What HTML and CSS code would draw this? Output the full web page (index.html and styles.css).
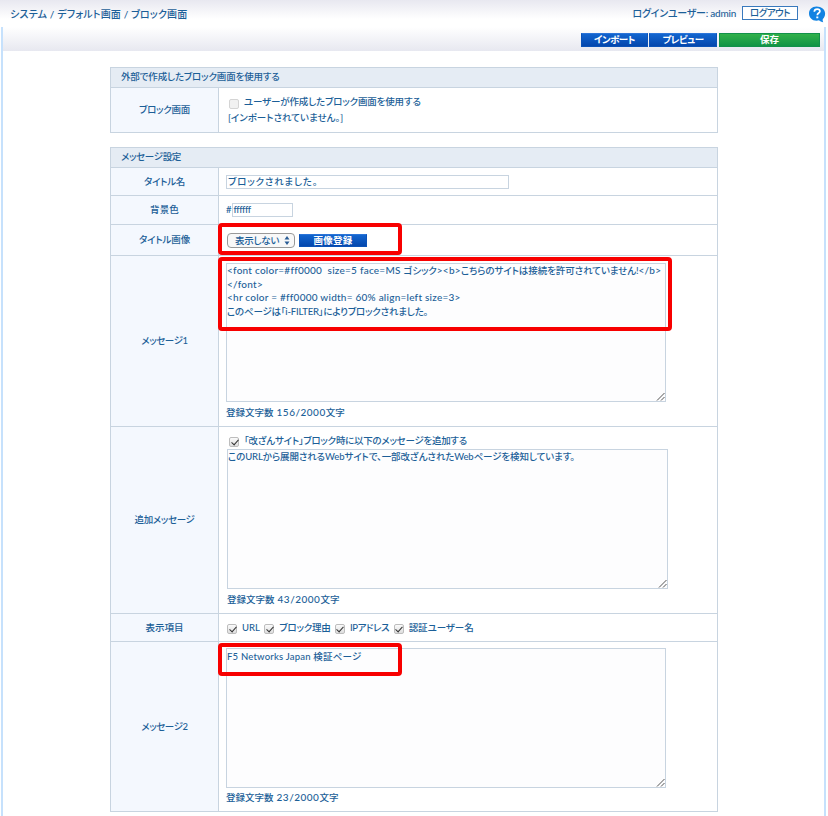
FILE: index.html
```html
<!DOCTYPE html>
<html lang="ja">
<head>
<meta charset="utf-8">
<title>ブロック画面</title>
<link rel="stylesheet" href="styles.css">
</head>
<body>
<header class="topbar">
  <nav class="crumbs"><span class="t s-crumb">システム / デフォルト画面 / ブロック画面</span></nav>
  <div class="user"><span class="t s-user">ログインユーザー: admin</span></div>
  <button class="logout"><span class="t s-logout">ログアウト</span></button>
  <svg class="help" viewBox="0 0 18 18"><path d="M8.500.5C4 .5 1 3.500 1 7.500S4 14.700 8.500 14.700c1 0 1.800-.1 2.500-.4 1 1 2.600 1.700 4.300 1.900-.6-.9-.8-2-.5-3.200 1.500-1.300 2.300-3.200 2.300-5.500C17.100 3.500 13.500.5 8.500.5Z" fill="#1283e2"/><path d="M6.300 5.700c.1-1.700 1.200-2.600 2.900-2.600 1.600 0 2.700.8 2.700 2.100 0 1.900-2.500 1.800-2.600 4" fill="none" stroke="#fff" stroke-width="1.700"/><rect x="8.300" y="10.500" width="2" height="1.800" fill="#fff"/></svg>
</header>
<main class="frame">
  <div class="toolbar">
    <button class="btn import"><span class="t s-btn">インポート</span></button>
    <button class="btn"><span class="t s-btn">プレビュー</span></button>
    <button class="btn save"><span class="t">保存</span></button>
  </div>
  <section class="panel">
    <h2><span class="t s-h1">外部で作成したブロック画面を使用する</span></h2>
    <div class="row r-ext">
      <div class="name"><span class="t s-n1">ブロック画面</span></div>
      <div class="cell">
        <label class="opt first"><i class="cb off"></i><span class="t s-useext">ユーザーが作成したブロック画面を使用する</span></label>
        <p class="state"><span class="t">[インポートされていません。]</span></p>
      </div>
    </div>
  </section>
  <section class="panel settings">
    <h2><span class="t s-h2">メッセージ設定</span></h2>
    <div class="row r-title">
      <div class="name"><span class="t s-n2">タイトル名</span></div>
      <div class="cell mid"><div class="input wide"><span class="t s-title">ブロックされました。</span></div></div>
    </div>
    <div class="row r-color">
      <div class="name"><span class="t s-n3">背景色</span></div>
      <div class="cell mid"><span class="t">#</span><div class="input short"><span class="t s-hex">ffffff</span></div></div>
    </div>
    <div class="row r-image">
      <div class="name"><span class="t s-n4">タイトル画像</span></div>
      <div class="cell mid">
        <div class="select"><span class="t s-sel">表示しない</span><svg viewBox="0 0 6 9"><path d="M3 0 5.500 3.500H.5ZM3 9 .5 5.500h5Z" fill="#2a5c95"/></svg></div>
        <button class="btn img"><span class="t s-img">画像登録</span></button>
      </div>
      <i class="mark m-image"></i>
    </div>
    <div class="row r-msg1">
      <div class="name"><span class="t s-n5">メッセージ1</span></div>
      <div class="cell">
        <div class="area a1">
          <p><span class="t s-l1"><span class="en">&lt;font color=#ff0000&nbsp; size=5 face=MS </span>ゴシック<span class="en">&gt;&lt;b&gt;</span>こちらのサイトは接続を許可されていません!<span class="en">&lt;/b&gt;</span></span></p>
          <p><span class="t en">&lt;/font&gt;</span></p>
          <p><span class="t en">&lt;hr color = #ff0000 width= 60% align=left size=3&gt;</span></p>
          <p><span class="t s-l4">このページは「i-FILTER」によりブロックされました。</span></p>
          <svg class="grip" viewBox="0 0 9 9"><path d="M1 8.500 8.500 1M5 8.500 8.500 5" stroke="#555" fill="none"/></svg>
        </div>
        <p class="count"><span class="t">登録文字数<span class="num"> 156/2000</span>文字</span></p>
      </div>
      <i class="mark m-msg1"></i>
    </div>
    <div class="row r-add">
      <div class="name"><span class="t s-n6">追加メッセージ</span></div>
      <div class="cell">
        <label class="opt add"><i class="cb on"></i><span class="t s-add">「改ざんサイト」ブロック時に以下のメッセージを追加する</span></label>
        <div class="area a2">
          <p><span class="t s-l5">このURLから展開されるWebサイトで、一部改ざんされたWebページを検知しています。</span></p>
          <svg class="grip" viewBox="0 0 9 9"><path d="M1 8.500 8.500 1M5 8.500 8.500 5" stroke="#555" fill="none"/></svg>
        </div>
        <p class="count c2"><span class="t">登録文字数<span class="num"> 43/2000</span>文字</span></p>
      </div>
    </div>
    <div class="row r-items">
      <div class="name"><span class="t">表示項目</span></div>
      <div class="cell mid">
        <label class="item"><i class="cb on"></i><span class="t">URL</span></label>
        <label class="item"><i class="cb on"></i><span class="t s-i2">ブロック理由</span></label>
        <label class="item"><i class="cb on"></i><span class="t s-i3">IPアドレス</span></label>
        <label class="item"><i class="cb on"></i><span class="t s-i4">認証ユーザー名</span></label>
      </div>
    </div>
    <div class="row r-msg2">
      <div class="name"><span class="t s-n5">メッセージ2</span></div>
      <div class="cell">
        <div class="area a3">
          <p><span class="t s-l6">F5 Networks Japan 検証ページ</span></p>
          <svg class="grip" viewBox="0 0 9 9"><path d="M1 8.500 8.500 1M5 8.500 8.500 5" stroke="#555" fill="none"/></svg>
        </div>
        <p class="count"><span class="t">登録文字数<span class="num"> 23/2000</span>文字</span></p>
      </div>
      <i class="mark m-msg2"></i>
    </div>
  </section>
</main>
</body>
</html>
```
FILE: styles.css
```css
* { box-sizing: border-box; }
body {
  margin: 0;
  width: 828px;
  height: 816px;
  overflow: hidden;
  background: #fff;
  color: #1c5f98;
  font: 500 9.5px/13.6px Lato, "Noto Sans CJK JP", sans-serif;
  font-feature-settings: "palt";
}
h2, p { margin: 0; font: inherit; }
button { font: inherit; padding: 0; border: 0; }
.t { white-space: nowrap; }
.en { font-size: 10px; letter-spacing: .24px; line-height: 1; }
.num { font-size: 10px; letter-spacing: .5px; line-height: 1; }
.s-crumb { letter-spacing: .17px; }
.s-user { letter-spacing: -.25px; }
.s-logout, .s-btn { letter-spacing: -.5px; }
.s-h1, .s-useext { letter-spacing: -.15px; }
.s-n1, .s-n2, .s-sel, .s-i2 { letter-spacing: -.26px; }
.s-h2, .s-n6 { letter-spacing: -.32px; }
.s-title { letter-spacing: .8px; }
.s-n3 { letter-spacing: .16px; }
.s-hex { letter-spacing: -.5px; }
.s-n4 { letter-spacing: -.15px; }
.s-img { letter-spacing: .25px; }
.s-n5 { letter-spacing: -.4px; }
.s-l1 { letter-spacing: -.08px; }
.s-l4 { letter-spacing: -.2px; }
.s-l5 { letter-spacing: -.1px; }
.s-add { letter-spacing: -.26px; }
.s-i3 { letter-spacing: -.42px; }
.s-i4 { letter-spacing: -.06px; }
.s-l6 { letter-spacing: .2px; }
.topbar {
  display: flex;
  align-items: flex-start;
  height: 27px;
  background: linear-gradient(#e8e8f0, #fff 19px);
}
.crumbs { padding: 8px 0 0 10px; flex: 1; font-size: 10px; }
.user { padding-top: 7px; margin-right: 6px; font-size: 10px; }
.logout {
  width: 56px;
  height: 14px;
  margin: 6px 10px 0 0;
  border: 1px solid #3979bd;
  background: #fff;
  color: #1c5f98;
  line-height: 12px;
}
.help { width: 18px; height: 18px; margin: 6px 2px 0 0; }
.frame {
  height: 789px;
  margin: 0 2px 0 1px;
  border: solid #c6e1fc;
  border-width: 0 2px;
}
.toolbar {
  display: flex;
  justify-content: flex-end;
  gap: 1px;
  height: 24px;
  padding: 6px 4px 0 0;
  background: linear-gradient(#fff, #e7e8f0);
}
.btn {
  width: 68px;
  height: 14px;
  border: 1px solid #0b52b7;
  border-top-color: #2b74d8;
  background: linear-gradient(#1265cf, #0447ad);
  color: #fff;
  font-weight: 700;
  line-height: 10px;
}
.import { width: 67px; }
.btn .t { display: block; }
.save {
  width: 101px;
  margin-left: 1px;
  border-color: #11914a;
  background: linear-gradient(#30b04a, #119445);
}
.panel {
  width: 608px;
  margin: 16px 0 0 107px;
  border: 1px solid #c8d4e0;
}
.settings { margin-top: 14px; }
.panel h2 {
  height: 19px;
  padding-left: 10px;
  background: #e5ecf4;
  line-height: 18px;
}
.row {
  position: relative;
  display: grid;
  grid-template-columns: 108px 1fr;
  border-top: 1px solid #c8d4e0;
}
.name {
  display: flex;
  align-items: center;
  justify-content: center;
  border-right: 1px solid #c8d4e0;
  background: #f4f8fe;
}
.cell { padding-left: 7px; }
.mid { display: flex; align-items: center; }
.r-ext { height: 45px; }
.r-title { height: 28px; }
.r-color { height: 29px; }
.r-image { height: 31px; }
.r-msg1 { height: 171px; }
.r-add { height: 187px; }
.r-items { height: 28px; }
.r-msg2 { height: 170px; }
.opt { display: flex; align-items: center; }
.first { padding: 7px 0 0 3px; }
.first .cb { top: 2px; }
.state { padding: 2px 0 0 2px; }
.cb {
  position: relative;
  top: 1px;
  width: 10px;
  height: 10px;
  margin-right: 5px;
  border: 1px solid #bdbdbd;
  border-radius: 2px;
  background: linear-gradient(#fbfbfb, #dedede);
}
.off { border-color: #d4d4d4; background: #f1f1f1; }
.on::after {
  content: "";
  position: absolute;
  left: 2.5px;
  top: 0;
  width: 3px;
  height: 6px;
  border: solid #333;
  border-width: 0 1.5px 1.5px 0;
  transform: rotate(42deg);
}
.input {
  height: 14px;
  border: 1px solid #c8d4e0;
  padding-left: 1px;
  line-height: 12px;
}
.wide { width: 283px; }
.short { width: 61px; }
.select {
  display: flex;
  align-items: center;
  justify-content: space-between;
  width: 68px;
  height: 15px;
  margin: 1px 4px 0 1px;
  padding: 0 4px 0 7px;
  border: 1px solid #999;
  border-radius: 4px;
  background: #f8f8f8;
}
.select svg { width: 6px; height: 9px; }
.img { height: 13px; margin-top: 1px; }
.area {
  position: relative;
  width: 440px;
  height: 139px;
  border: 1px solid #c8d4e0;
  background: #fdfdfe;
}
.area p { height: 13.6px; }
.a1 { margin-top: 7px; }
.a2 { width: 441px; height: 140px; margin-left: 1px; }
.a3 { margin-top: 6px; padding-top: 1px; height: 140px; }
.grip { position: absolute; right: 0; bottom: 0; width: 9px; height: 9px; }
.count { padding-top: 4px; }
.a3 + .count { padding-top: 3px; }
.c2 { padding-left: 1px; }
.add { height: 22px; padding: 6px 0 0 3px; }
.item { display: flex; align-items: center; margin-right: 3.5px; }
.item .cb { margin-left: 1px; }
.mark {
  position: absolute;
  z-index: 1;
  left: 107px;
  border: 4px solid #f80000;
  border-radius: 4px;
}
.m-image { top: -2px; width: 184px; height: 32px; }
.m-msg1 { top: 1px; width: 454px; height: 74px; }
.m-msg2 { top: 1px; width: 184px; height: 33px; }
```
